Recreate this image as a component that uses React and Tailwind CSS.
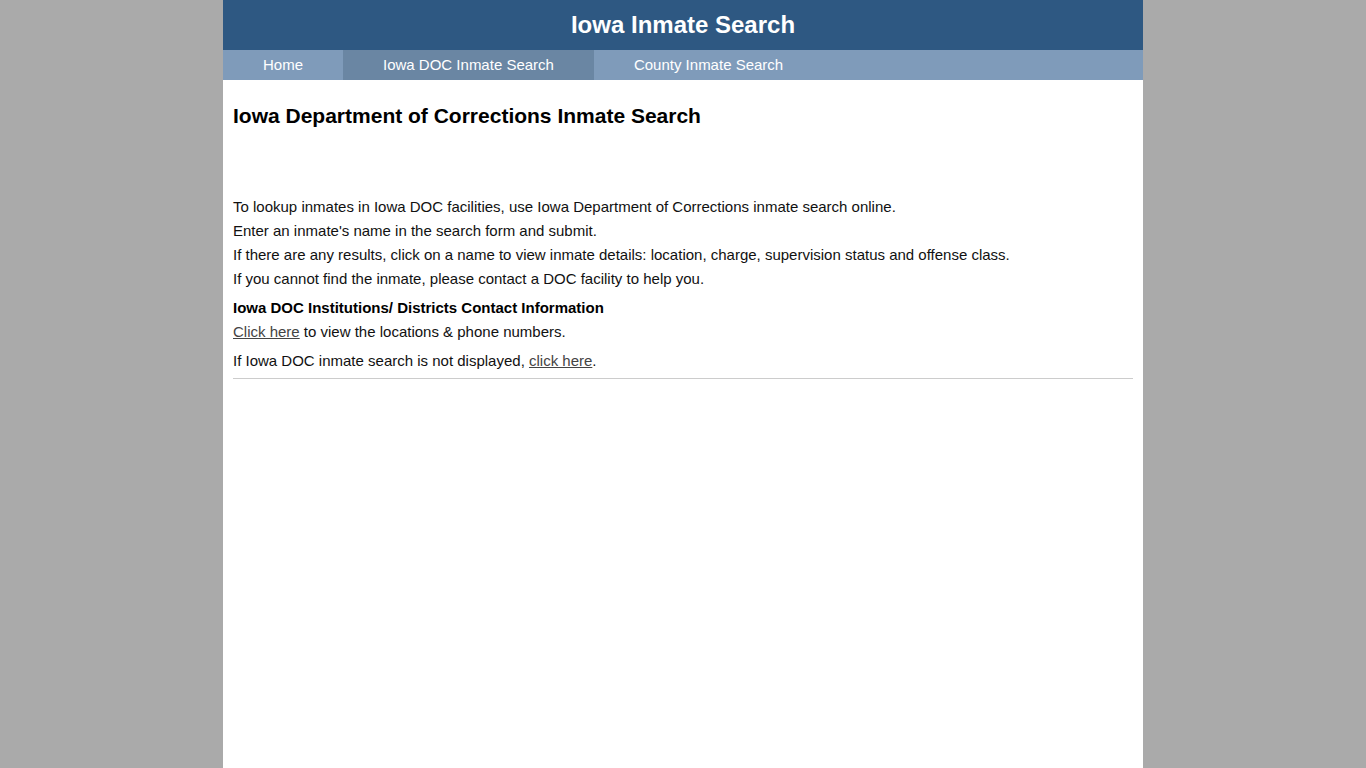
export default function App() {
  return (
    <div className="min-h-[768px] bg-[#aaaaaa] font-['Liberation_Sans',Arial,sans-serif]">
      <div className="mx-auto w-[920px] min-h-[768px] bg-white">
        <header className="h-[50px] bg-[#2e5882] flex items-center justify-center">
          <h1 className="text-[24px] font-bold text-white">Iowa Inmate Search</h1>
        </header>
        <nav className="h-[30px] bg-[#7f9bba] flex text-[15px] text-white">
          <a className="h-full flex items-center px-[40px]">Home</a>
          <a className="h-full flex items-center px-[40px] bg-[#6a86a3]">Iowa DOC Inmate Search</a>
          <a className="h-full flex items-center px-[40px]">County Inmate Search</a>
        </nav>
        <main className="px-[10px] text-[15px] text-[#111]">
          <h2 className="pt-[24px] text-[21px] font-bold text-black leading-[24px]">
            Iowa Department of Corrections Inmate Search
          </h2>
          <div className="mt-[67px] leading-[24px]">
            <p>To lookup inmates in Iowa DOC facilities, use Iowa Department of Corrections inmate search online.</p>
            <p>Enter an inmate's name in the search form and submit.</p>
            <p>If there are any results, click on a name to view inmate details: location, charge, supervision status and offense class.</p>
            <p>If you cannot find the inmate, please contact a DOC facility to help you.</p>
          </div>
          <h3 className="mt-[5px] font-bold text-black leading-[24px]">Iowa DOC Institutions/ Districts Contact Information</h3>
          <p className="leading-[24px]">
            <a className="underline text-[#444]">Click here</a> to view the locations &amp; phone numbers.
          </p>
          <p className="mt-[5px] leading-[24px]">
            If Iowa DOC inmate search is not displayed, <a className="underline text-[#444]">click here</a>.
          </p>
          <hr className="mt-[5px] border-t border-[#cccccc]" />
        </main>
      </div>
    </div>
  )
}
